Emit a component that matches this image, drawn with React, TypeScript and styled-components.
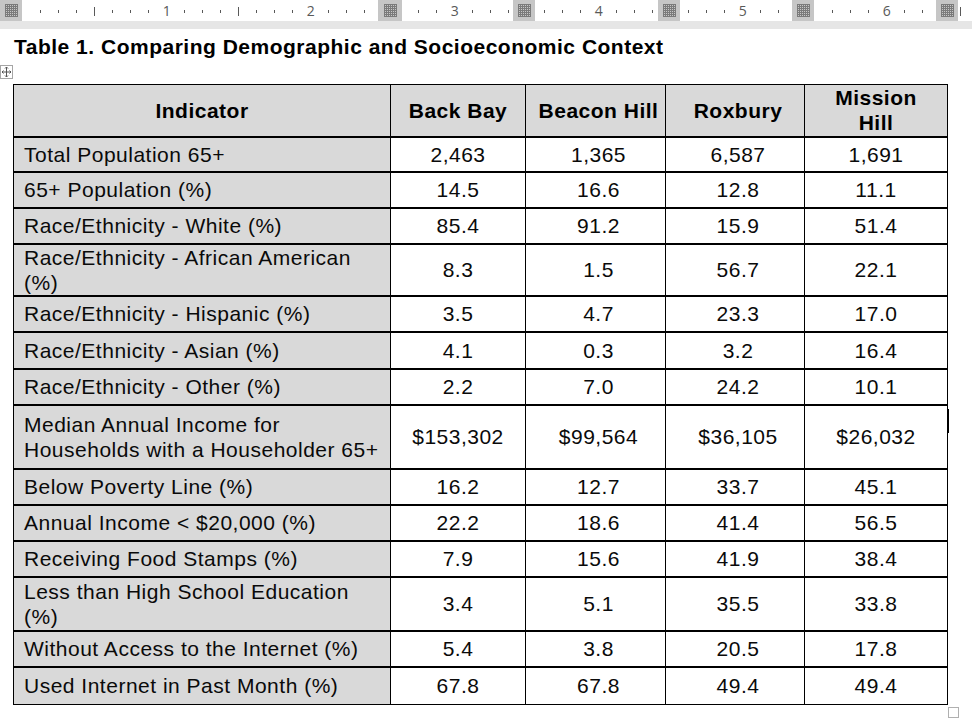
import React from "react";
import styled, { createGlobalStyle } from "styled-components";

const Global = createGlobalStyle`
  html, body { margin: 0; padding: 0; background: #fff; }
  body { font-family: "Liberation Sans", Arial, sans-serif; color: #000; }
`;

const Page = styled.div`
  width: 972px;
  height: 724px;
  overflow: hidden;
  display: flex;
  flex-direction: column;
  background: #fff;
`;

const RulerBar = styled.div`
  height: 21px;
  background: #fff;
  svg { display: block; }
`;

const RulerShade = styled.div`
  height: 8px;
  background: #e6e6e6;
`;

const Doc = styled.div`
  display: flex;
  flex-direction: column;
  padding: 6px 0 0 13px;
`;

const Title = styled.h1`
  margin: 0 0 26px 1px;
  font: bold 21px/23px "Liberation Sans", Arial, sans-serif;
  letter-spacing: 0.5px;
  color: #000;
`;

const TableWrap = styled.div`
  position: relative;
  width: 935px;
`;

const MoveHandle = styled.div`
  position: absolute;
  left: -13px;
  top: -19px;
  width: 11px;
  height: 12px;
  border: 1px solid #a6a6a6;
  background: #fff;
  svg { display: block; }
`;

const ResizeHandle = styled.div`
  position: absolute;
  right: -11px;
  bottom: -13px;
  width: 9px;
  height: 9px;
  border: 1px solid #b0b0b0;
  background: #fff;
`;

const Caret = styled.div`
  position: absolute;
  left: 935px;
  top: 325px;
  width: 1px;
  height: 24px;
  background: #000;
  z-index: 2;
`;

const Table = styled.table`
  border-collapse: collapse;
  table-layout: fixed;
  width: 934px;
  font-size: 21px;
  line-height: 25px;
  letter-spacing: 0.5px;
`;

const Col = styled.col<{ $w: number }>`
  width: ${(p) => p.$w}px;
`;

const Row = styled.tr<{ $h: number }>`
  height: ${(p) => p.$h}px;
  &:first-child > * { border-top-width: 1px; }
  &:last-child > * { border-bottom-width: 1px; }
`;

const HeadCell = styled.th<{ $shift?: boolean }>`
  border-style: solid;
  border-color: #000;
  border-width: 2px 1px;
  background: #d9d9d9;
  font-weight: bold;
  text-align: center;
  vertical-align: middle;
  padding: ${(p) => (p.$shift ? "0 0 0 6px" : "0 3px")};
`;

const Cell = styled.td<{ $label?: boolean; $shift?: boolean }>`
  border-style: solid;
  border-color: #000;
  border-width: 2px 1px;
  background: ${(p) => (p.$label ? "#d9d9d9" : "#fff")};
  text-align: ${(p) => (p.$label ? "left" : "center")};
  vertical-align: middle;
  padding: ${(p) => (p.$label ? "0 4px 0 10px" : p.$shift ? "0 1px 0 7px" : "0 4px")};
  white-space: nowrap;
  color: #0a0a0a;
`;

type RowData = { label: React.ReactNode; values: string[]; h: number };

const rows: RowData[] = [
  { label: "Total Population 65+", values: ["2,463", "1,365", "6,587", "1,691"], h: 35 },
  { label: "65+ Population (%)", values: ["14.5", "16.6", "12.8", "11.1"], h: 36 },
  { label: "Race/Ethnicity - White (%)", values: ["85.4", "91.2", "15.9", "51.4"], h: 36 },
  {
    label: (
      <>
        Race/Ethnicity - African American
        <br />
        (%)
      </>
    ),
    values: ["8.3", "1.5", "56.7", "22.1"],
    h: 52,
  },
  { label: "Race/Ethnicity - Hispanic (%)", values: ["3.5", "4.7", "23.3", "17.0"], h: 36 },
  { label: "Race/Ethnicity - Asian (%)", values: ["4.1", "0.3", "3.2", "16.4"], h: 37 },
  { label: "Race/Ethnicity - Other (%)", values: ["2.2", "7.0", "24.2", "10.1"], h: 36 },
  {
    label: (
      <>
        Median Annual Income for
        <br />
        Households with a Householder 65+
      </>
    ),
    values: ["$153,302", "$99,564", "$36,105", "$26,032"],
    h: 64,
  },
  { label: "Below Poverty Line (%)", values: ["16.2", "12.7", "33.7", "45.1"], h: 36 },
  { label: "Annual Income < $20,000 (%)", values: ["22.2", "18.6", "41.4", "56.5"], h: 36 },
  { label: "Receiving Food Stamps (%)", values: ["7.9", "15.6", "41.9", "38.4"], h: 36 },
  {
    label: (
      <>
        Less than High School Education
        <br />
        (%)
      </>
    ),
    values: ["3.4", "5.1", "35.5", "33.8"],
    h: 54,
  },
  { label: "Without Access to the Internet (%)", values: ["5.4", "3.8", "20.5", "17.8"], h: 36 },
  { label: "Used Internet in Past Month (%)", values: ["67.8", "67.8", "49.4", "49.4"], h: 38 },
];

const colWidths = [377, 135, 140, 139, 143];

const blocks: [number, number][] = [
  [0, 22],
  [378, 402],
  [513, 535],
  [658, 680],
  [792, 814],
  [936, 958],
];

function GridIcon({ x }: { x: number }) {
  const cells: React.ReactNode[] = [];
  for (let i = 0; i < 13; i++) {
    for (let j = 0; j < 13; j++) {
      if (i % 2 === 0 || j % 2 === 0) {
        cells.push(<rect key={`${i}-${j}`} x={x + i} y={4 + j} width={1} height={1} fill="#7a7a7a" />);
      }
    }
  }
  return <g>{cells}</g>;
}

function Ruler() {
  const origin = 22.7;
  const inBlock = (x: number) => blocks.some(([a, b]) => x >= a - 1 && x <= b + 1);
  const ticks: React.ReactNode[] = [];
  const nums: React.ReactNode[] = [];
  for (let k = 1; k * 18 + origin < 972; k++) {
    const x = origin + k * 18;
    if (inBlock(x)) continue;
    if (k % 8 === 0) {
      nums.push(
        <text
          key={`n${k}`}
          x={x}
          y={16}
          textAnchor="middle"
          fontFamily="'Open Sans', 'DejaVu Sans', sans-serif"
          fontSize={14}
          fill="#595959"
        >
          {k / 8}
        </text>
      );
      continue;
    }
    const tall = k % 4 === 0;
    ticks.push(
      <rect
        key={`t${k}`}
        x={Math.floor(x)}
        y={tall ? 7 : 10}
        width={1}
        height={tall ? 9 : 3}
        fill="#595959"
      />
    );
  }
  return (
    <svg width={972} height={21} viewBox="0 0 972 21">
      {blocks.map(([a, b], i) => (
        <g key={`b${i}`}>
          <rect x={a} y={0} width={b - a} height={21} fill="#c6c6c6" />
          <GridIcon x={Math.round((a + b) / 2) - 6} />
        </g>
      ))}
      {ticks}
      {nums}
      <rect x={960} y={7} width={1} height={9} fill="#595959" />
    </svg>
  );
}

export default function App() {
  return (
    <Page>
      <Global />
      <RulerBar>
        <Ruler />
      </RulerBar>
      <RulerShade />
      <Doc>
        <Title>Table 1. Comparing Demographic and Socioeconomic Context</Title>
        <TableWrap>
          <MoveHandle>
            <svg width={11} height={12} viewBox="0 0 11 12">
              <path
                d="M5.5 1 V11 M1 6 H10 M4 2.5 L5.5 1 L7 2.5 M4 9.5 L5.5 11 L7 9.5 M2.5 4.5 L1 6 L2.5 7.5 M8.5 4.5 L10 6 L8.5 7.5"
                stroke="#555"
                strokeWidth={1}
                fill="none"
              />
            </svg>
          </MoveHandle>
          <Table>
            <colgroup>
              {colWidths.map((w, i) => (
                <Col key={i} $w={w} />
              ))}
            </colgroup>
            <tbody>
              <Row $h={52}>
                <HeadCell>Indicator</HeadCell>
                <HeadCell>Back Bay</HeadCell>
                <HeadCell $shift>Beacon Hill</HeadCell>
                <HeadCell $shift>Roxbury</HeadCell>
                <HeadCell>
                  Mission
                  <br />
                  Hill
                </HeadCell>
              </Row>
              {rows.map((r, i) => (
                <Row key={i} $h={r.h}>
                  <Cell $label>{r.label}</Cell>
                  {r.values.map((v, j) => (
                    <Cell key={j} $shift={j === 1 || j === 2}>
                      {v}
                    </Cell>
                  ))}
                </Row>
              ))}
            </tbody>
          </Table>
          <Caret />
          <ResizeHandle />
        </TableWrap>
      </Doc>
    </Page>
  );
}
